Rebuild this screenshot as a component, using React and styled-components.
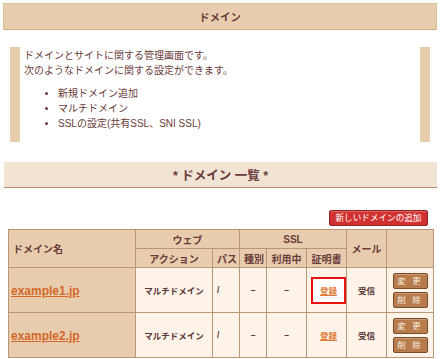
import React from "react";
import styled, { createGlobalStyle } from "styled-components";

const GlobalStyle = createGlobalStyle`
  body {
    margin: 0;
    background: #ffffff;
    font-family: "Liberation Sans", "Noto Sans CJK JP", sans-serif;
    color: #6b3b3b;
  }
`;

const domains = [
  { name: "example1.jp", action: "マルチドメイン", path: "/", kind: "–", inUse: "–", mail: "受信", highlight: true },
  { name: "example2.jp", action: "マルチドメイン", path: "/", kind: "–", inUse: "–", mail: "受信", highlight: false },
];

const App = () => {
  return (
    <Page>
      <GlobalStyle />
      <TitleBar>ドメイン</TitleBar>

      <InfoBox>
        <p className="info__lead">
          ドメインとサイトに関する管理画面です。
          <br />
          次のようなドメインに関する設定ができます。
        </p>
        <ul className="info__list">
          <li>新規ドメイン追加</li>
          <li>マルチドメイン</li>
          <li>SSLの設定(共有SSL、SNI SSL)</li>
        </ul>
      </InfoBox>

      <SectionBar>* ドメイン 一覧 *</SectionBar>

      <Toolbar>
        <AddButton>新しいドメインの追加</AddButton>
      </Toolbar>

      <DomainTable>
        <colgroup>
          <col style={{ width: 127 }} />
          <col style={{ width: 77 }} />
          <col style={{ width: 27 }} />
          <col style={{ width: 27 }} />
          <col style={{ width: 40 }} />
          <col style={{ width: 40 }} />
          <col style={{ width: 40 }} />
          <col style={{ width: 47 }} />
        </colgroup>
        <thead>
          <tr>
            <HeadCell rowSpan={2} $align="left">ドメイン名</HeadCell>
            <HeadCell colSpan={2}>ウェブ</HeadCell>
            <HeadCell colSpan={3}>SSL</HeadCell>
            <HeadCell rowSpan={2}>メール</HeadCell>
            <HeadCell rowSpan={2}></HeadCell>
          </tr>
          <tr>
            <HeadCell>アクション</HeadCell>
            <HeadCell>パス</HeadCell>
            <HeadCell>種別</HeadCell>
            <HeadCell>利用中</HeadCell>
            <HeadCell>証明書</HeadCell>
          </tr>
        </thead>
        <tbody>
          {domains.map((d) => (
            <tr key={d.name}>
              <NameCell>
                <DomainLink href="#">{d.name}</DomainLink>
              </NameCell>
              <DataCell>{d.action}</DataCell>
              <DataCell $align="left">{d.path}</DataCell>
              <DataCell>{d.kind}</DataCell>
              <DataCell>{d.inUse}</DataCell>
              <DataCell>
                <CertBox $highlight={d.highlight}>
                  <CertLink href="#">登録</CertLink>
                </CertBox>
              </DataCell>
              <DataCell>{d.mail}</DataCell>
              <DataCell>
                <ActionStack>
                  <SmallButton>変 更</SmallButton>
                  <SmallButton>削 除</SmallButton>
                </ActionStack>
              </DataCell>
            </tr>
          ))}
        </tbody>
      </DomainTable>
    </Page>
  );
};

const Page = styled.div`
  width: 440px;
  padding: 3px 0 0;
  box-sizing: border-box;
`;

const TitleBar = styled.div`
  margin: 0 3px;
  height: 27px;
  box-sizing: border-box;
  background-color: #e7cdad;
  border: 1px solid #dcbf9c;
  border-bottom-color: #cfae88;
  display: flex;
  align-items: center;
  justify-content: center;
  font-size: 10.5px;
  font-weight: 700;
  color: #6b3b3b;
`;

const InfoBox = styled.div`
  margin: 17px 10px 0;
  height: 95px;
  box-sizing: border-box;
  border-left: 10px solid #e7cdad;
  border-right: 10px solid #e7cdad;
  padding: 1px 4px 0;
  font-size: 10px;
  line-height: 15px;
  color: #6b3b3b;

  .info__lead {
    margin: 0;
  }
  .info__list {
    margin: 8px 0 0;
    padding-left: 34px;
    list-style: disc;
  }
`;

const SectionBar = styled.div`
  margin: 20px 3px 0 4px;
  height: 26px;
  box-sizing: border-box;
  background-color: #f1e4d3;
  border-bottom: 1px solid #b48b6a;
  display: flex;
  align-items: center;
  justify-content: center;
  font-size: 12.5px;
  font-weight: 700;
  color: #6b3b3b;
`;

const Toolbar = styled.div`
  display: flex;
  justify-content: flex-end;
  padding: 22px 12px 0 0;
`;

const AddButton = styled.button`
  height: 16px;
  width: 99px;
  padding: 0;
  box-sizing: border-box;
  background-color: #d23131;
  border: 1px solid #8e2121;
  border-radius: 2px;
  box-shadow: inset 0 1px 0 rgba(255, 255, 255, 0.25);
  color: #ffffff;
  font-family: "Liberation Sans", "Noto Sans CJK JP", sans-serif;
  font-size: 8.6px;
  line-height: 14px;
  cursor: pointer;
`;

const DomainTable = styled.table`
  margin: 3px 0 0 8px;
  width: 425px;
  table-layout: fixed;
  border-collapse: collapse;
  border: 1px solid #c4a585;

  tr {
    height: 19px;
  }
  tbody tr {
    height: 45px;
  }
`;

const HeadCell = styled.th`
  background-color: #e7cdad;
  border: 1px solid #b99676;
  padding: 0 4px;
  font-size: 10px;
  font-weight: 700;
  color: #6b3b3b;
  text-align: ${(p) => p.$align || "center"};
  white-space: nowrap;
  overflow: hidden;
`;

const NameCell = styled.td`
  background-color: #e7cdad;
  border: 1px solid #b99676;
  padding: 0 2px;
`;

const DomainLink = styled.a`
  font-size: 12px;
  font-weight: 700;
  color: #d5672a;
  text-decoration: underline;
`;

const DataCell = styled.td`
  background-color: #fdf3e8;
  border: 1px solid #b99676;
  padding: 0 4px;
  font-size: 8.5px;
  font-weight: 700;
  color: #5a3535;
  text-align: ${(p) => p.$align || "center"};
  white-space: nowrap;
  overflow: hidden;
`;

const CertBox = styled.div`
  display: flex;
  align-items: center;
  justify-content: center;
  width: 35px;
  height: 27px;
  margin: 0 auto;
  box-sizing: border-box;
  border: 2px solid ${(p) => (p.$highlight ? "#e81212" : "transparent")};
  background: ${(p) => (p.$highlight ? "#ffffff" : "transparent")};
`;

const CertLink = styled.a`
  font-size: 8.5px;
  font-weight: 700;
  color: #e07a34;
  text-decoration: underline;
`;

const ActionStack = styled.div`
  display: flex;
  flex-direction: column;
  align-items: center;
  gap: 3px;
`;

const SmallButton = styled.button`
  width: 35px;
  height: 16px;
  padding: 0;
  box-sizing: border-box;
  background-color: #b87b4c;
  border: 1px solid #7d4c2a;
  border-radius: 2px;
  box-shadow: inset 0 1px 0 rgba(255, 255, 255, 0.25);
  color: #fbeee0;
  font-family: "Liberation Sans", "Noto Sans CJK JP", sans-serif;
  font-size: 8.5px;
  letter-spacing: 2px;
  line-height: 14px;
  cursor: pointer;
`;

export default App;
